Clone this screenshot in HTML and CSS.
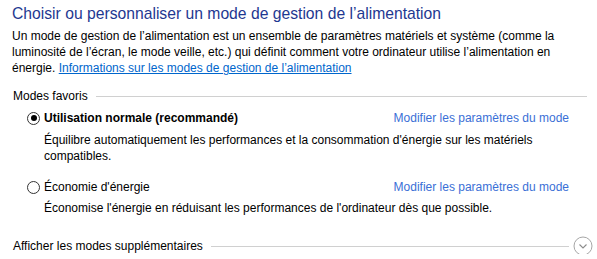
FILE: index.html
```html
<!DOCTYPE html>
<html lang="fr">
<head>
<meta charset="utf-8">
<link rel="stylesheet" href="styles.css">
</head>
<body>
<div class="page">
  <h1 class="title">Choisir ou personnaliser un mode de gestion de l’alimentation</h1>
  <p class="intro">Un mode de gestion de l’alimentation est un ensemble de paramètres matériels et système (comme la luminosité de l’écran, le mode veille, etc.) qui définit comment votre ordinateur utilise l’alimentation en énergie. <a class="link" href="#">Informations sur les modes de gestion de l’alimentation</a></p>

  <div class="group-head">
    <span class="group-label">Modes favoris</span>
    <span class="rule"></span>
  </div>

  <div class="plan">
    <div class="plan-row">
      <span class="radio checked"></span>
      <span class="plan-name bold">Utilisation normale (recommandé)</span>
      <a class="plan-link" href="#">Modifier les paramètres du mode</a>
    </div>
    <p class="plan-desc">Équilibre automatiquement les performances et la consommation d'énergie sur les matériels compatibles.</p>
  </div>

  <div class="plan plan-second">
    <div class="plan-row">
      <span class="radio"></span>
      <span class="plan-name">Économie d'énergie</span>
      <a class="plan-link" href="#">Modifier les paramètres du mode</a>
    </div>
    <p class="plan-desc">Économise l'énergie en réduisant les performances de l'ordinateur dès que possible.</p>
  </div>

  <div class="group-head more">
    <span class="group-label">Afficher les modes supplémentaires</span>
    <span class="rule"></span>
    <span class="expand">
      <svg width="20" height="20" viewBox="0 0 20 20"><circle cx="10" cy="10" r="9" fill="none" stroke="#a6a6a6" stroke-width="1"/><path d="M6.5 8.5 L10 12 L13.5 8.5" fill="none" stroke="#8c8c8c" stroke-width="1.1"/></svg>
    </span>
  </div>
</div>
</body>
</html>
```

FILE: styles.css
```css
html, body {
  margin: 0;
  padding: 0;
  background: #ffffff;
}
body {
  font-family: "Liberation Sans", Arial, sans-serif;
  font-size: 12px;
  line-height: 16px;
  color: #000000;
}
.page {
  width: 597px;
  padding: 4px 0 0 12px;
  box-sizing: border-box;
}
.title {
  margin: 0;
  font-size: 15.7px;
  font-weight: normal;
  line-height: 20px;
  color: #1e3891;
}
.intro {
  margin: 4px 0 0 0;
  width: 545px;
}
.link {
  color: #0066cc;
  text-decoration: underline;
}
.group-head {
  display: flex;
  align-items: center;
  margin-top: 12px;
  padding-left: 1px;
  width: 574px;
}
.group-label {
  white-space: nowrap;
}
.rule {
  flex: 1;
  height: 1px;
  background: #d0d0d0;
  margin-left: 8px;
}
.plan {
  margin-top: 6px;
  padding-left: 15px;
  width: 542px;
}
.plan-second {
  margin-top: 15px;
}
.plan-row {
  display: flex;
  align-items: center;
}
.radio {
  width: 11px;
  height: 11px;
  border: 1px solid #333333;
  border-radius: 50%;
  box-sizing: content-box;
  margin-right: 4px;
  position: relative;
  flex: none;
}
.radio.checked::after {
  content: "";
  position: absolute;
  left: 2.5px;
  top: 2.5px;
  width: 6px;
  height: 6px;
  border-radius: 50%;
  background: #000000;
}
.plan-name {
  flex: 1;
}
.bold {
  font-weight: bold;
}
.plan-link {
  color: #3a6fd6;
  text-decoration: none;
}
.plan-desc {
  margin: 6px 0 0 17px;
  width: 520px;
}
.plan-second .plan-desc {
  margin-top: 5px;
}
.more {
  margin-top: 22px;
  width: 580px;
}
.more .rule {
  margin-right: 4px;
}
.expand {
  display: flex;
  width: 20px;
  height: 16px;
  align-items: center;
  justify-content: center;
  overflow: visible;
}
```
